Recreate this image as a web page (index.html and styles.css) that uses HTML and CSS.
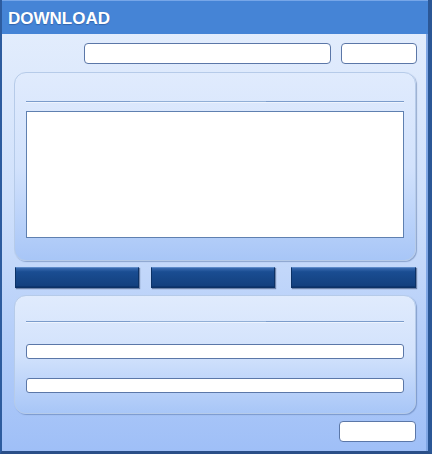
FILE: index.html
```html
<!DOCTYPE html>
<html>
<head>
    <title>Download</title>
    <link rel="stylesheet" href="styles.css">
</head>
<body>
    <div class="window">
        <div class="titlebar">DOWNLOAD</div>
        <div class="content">
            <div class="top-row">
                <div class="field field-url"></div>
                <div class="field field-browse"></div>
            </div>

            <div class="panel panel-list">
                <div class="separator"><span></span></div>
                <div class="list-box"></div>
            </div>

            <div class="button-row">
                <div class="btn"></div>
                <div class="btn"></div>
                <div class="btn"></div>
            </div>

            <div class="panel panel-info">
                <div class="separator"><span></span></div>
                <div class="field field-line"></div>
                <div class="field field-line"></div>
            </div>

            <div class="bottom-row">
                <div class="field field-close"></div>
            </div>
        </div>
    </div>
</body>
</html>
```

FILE: styles.css
```css
* {
    box-sizing: border-box;
}
body {
    margin: 0;
    font-family: "Liberation Sans", Arial, sans-serif;
    background-color: #a0c0f8;
}
.window {
    width: 432px;
    height: 454px;
    border-left: 2px solid #2d5c9f;
    border-right: 4px solid #2b5796;
    border-bottom: 3px solid #2a4f88;
    background: linear-gradient(to bottom, #e6effd 0%, #cfe0fb 45%, #9fbff7 100%);
    box-shadow: inset -2px 0 0 #7fa6e4;
}
.titlebar {
    height: 34px;
    background-color: #4584d6;
    border-top: 1px solid #76a6e8;
    color: #fff;
    font-size: 17px;
    font-weight: bold;
    padding: 8px 0 0 6px;
    text-shadow: 0 1px 1px rgba(20, 50, 110, 0.4);
}
.content {
    padding: 9px 0 0 12px;
}
.field {
    background-color: #fff;
    border: 1px solid #5b77a8;
    border-radius: 4px;
}
.top-row {
    display: flex;
    justify-content: flex-end;
    gap: 10px;
    padding-right: 11px;
}
.field-url {
    width: 247px;
    height: 21px;
}
.field-browse {
    width: 76px;
    height: 21px;
}
.panel {
    width: 402px;
    margin-top: 8px;
    border: 1px solid #b6cbe9;
    border-radius: 12px;
    padding: 0 11px;
    background: linear-gradient(to bottom, #e0ebfd 0%, #d2e2fc 50%, #a8c6f7 100%);
    box-shadow: 1px 1px 1px rgba(70, 100, 150, 0.45);
}
.panel-list {
    height: 189px;
    padding-top: 28px;
}
.separator {
    height: 2px;
    border-top: 1px solid #7b9ccb;
    border-bottom: 1px solid #eef4fe;
    position: relative;
}
.separator span {
    position: absolute;
    left: 104px;
    width: 136px;
    top: -1px;
    height: 1px;
    background-color: #91afd6;
}
.list-box {
    margin-top: 8px;
    width: 378px;
    height: 127px;
    background-color: #fff;
    border: 1px solid #5f80b0;
}
.button-row {
    display: flex;
    margin-top: 6px;
    padding-left: 1px;
}
.btn {
    width: 124px;
    height: 21px;
    border: 1px solid #0c3266;
    border-top-color: #5d8ac8;
    background: linear-gradient(to bottom, #3a6bb0 0%, #1a4d92 20%, #123f7d 100%);
    box-shadow: 1px 1px 1px rgba(30, 50, 90, 0.5), inset 0 -1px 0 #0d3570;
}
.btn + .btn {
    margin-left: 12px;
}
.btn:last-child {
    margin-left: 16px;
    width: 125px;
}
.panel-info {
    height: 119px;
    margin-top: 7px;
    padding-top: 25px;
}
.field-line {
    width: 378px;
    height: 15px;
    border-radius: 3px;
    margin-top: 21px;
}
.field-line + .field-line {
    margin-top: 19px;
}
.bottom-row {
    display: flex;
    justify-content: flex-end;
    padding-right: 12px;
    margin-top: 7px;
}
.field-close {
    width: 77px;
    height: 21px;
}
```
